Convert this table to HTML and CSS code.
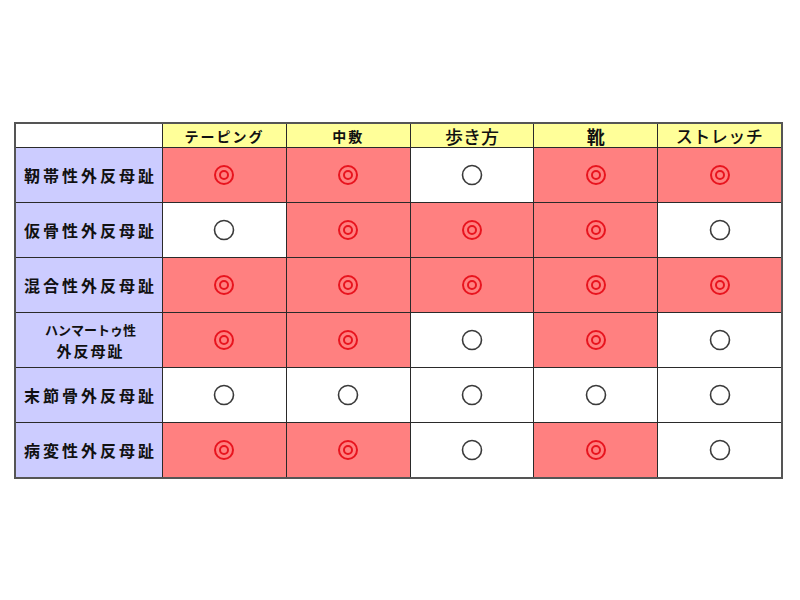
FILE: index.html
```html
<!DOCTYPE html>
<html lang="ja">
<head>
<meta charset="utf-8">
<title>外反母趾</title>
<link rel="stylesheet" href="styles.css">
</head>
<body>
<div class="page">
  <div class="grid">
    <div class="cell corner"></div>
    <div class="cell head h-tape">テーピング</div>
    <div class="cell head h-insole">中敷</div>
    <div class="cell head h-walk">歩き方</div>
    <div class="cell head h-shoe">靴</div>
    <div class="cell head h-stretch">ストレッチ</div>

    <div class="cell label">靭帯性外反母趾</div>
    <div class="cell red"><svg class="dbl" viewBox="0 0 22 22"><circle cx="11" cy="11" r="9"/><circle cx="11" cy="11" r="4"/></svg></div>
    <div class="cell red"><svg class="dbl" viewBox="0 0 22 22"><circle cx="11" cy="11" r="9"/><circle cx="11" cy="11" r="4"/></svg></div>
    <div class="cell white"><svg class="sgl" viewBox="0 0 22 22"><circle cx="11" cy="11" r="9.5"/></svg></div>
    <div class="cell red"><svg class="dbl" viewBox="0 0 22 22"><circle cx="11" cy="11" r="9"/><circle cx="11" cy="11" r="4"/></svg></div>
    <div class="cell red"><svg class="dbl" viewBox="0 0 22 22"><circle cx="11" cy="11" r="9"/><circle cx="11" cy="11" r="4"/></svg></div>

    <div class="cell label">仮骨性外反母趾</div>
    <div class="cell white"><svg class="sgl" viewBox="0 0 22 22"><circle cx="11" cy="11" r="9.5"/></svg></div>
    <div class="cell red"><svg class="dbl" viewBox="0 0 22 22"><circle cx="11" cy="11" r="9"/><circle cx="11" cy="11" r="4"/></svg></div>
    <div class="cell red"><svg class="dbl" viewBox="0 0 22 22"><circle cx="11" cy="11" r="9"/><circle cx="11" cy="11" r="4"/></svg></div>
    <div class="cell red"><svg class="dbl" viewBox="0 0 22 22"><circle cx="11" cy="11" r="9"/><circle cx="11" cy="11" r="4"/></svg></div>
    <div class="cell white"><svg class="sgl" viewBox="0 0 22 22"><circle cx="11" cy="11" r="9.5"/></svg></div>

    <div class="cell label">混合性外反母趾</div>
    <div class="cell red"><svg class="dbl" viewBox="0 0 22 22"><circle cx="11" cy="11" r="9"/><circle cx="11" cy="11" r="4"/></svg></div>
    <div class="cell red"><svg class="dbl" viewBox="0 0 22 22"><circle cx="11" cy="11" r="9"/><circle cx="11" cy="11" r="4"/></svg></div>
    <div class="cell red"><svg class="dbl" viewBox="0 0 22 22"><circle cx="11" cy="11" r="9"/><circle cx="11" cy="11" r="4"/></svg></div>
    <div class="cell red"><svg class="dbl" viewBox="0 0 22 22"><circle cx="11" cy="11" r="9"/><circle cx="11" cy="11" r="4"/></svg></div>
    <div class="cell red"><svg class="dbl" viewBox="0 0 22 22"><circle cx="11" cy="11" r="9"/><circle cx="11" cy="11" r="4"/></svg></div>

    <div class="cell label two"><span class="line small">ハンマートゥ性</span><span class="line">外反母趾</span></div>
    <div class="cell red"><svg class="dbl" viewBox="0 0 22 22"><circle cx="11" cy="11" r="9"/><circle cx="11" cy="11" r="4"/></svg></div>
    <div class="cell red"><svg class="dbl" viewBox="0 0 22 22"><circle cx="11" cy="11" r="9"/><circle cx="11" cy="11" r="4"/></svg></div>
    <div class="cell white"><svg class="sgl" viewBox="0 0 22 22"><circle cx="11" cy="11" r="9.5"/></svg></div>
    <div class="cell red"><svg class="dbl" viewBox="0 0 22 22"><circle cx="11" cy="11" r="9"/><circle cx="11" cy="11" r="4"/></svg></div>
    <div class="cell white"><svg class="sgl" viewBox="0 0 22 22"><circle cx="11" cy="11" r="9.5"/></svg></div>

    <div class="cell label">末節骨外反母趾</div>
    <div class="cell white"><svg class="sgl" viewBox="0 0 22 22"><circle cx="11" cy="11" r="9.5"/></svg></div>
    <div class="cell white"><svg class="sgl" viewBox="0 0 22 22"><circle cx="11" cy="11" r="9.5"/></svg></div>
    <div class="cell white"><svg class="sgl" viewBox="0 0 22 22"><circle cx="11" cy="11" r="9.5"/></svg></div>
    <div class="cell white"><svg class="sgl" viewBox="0 0 22 22"><circle cx="11" cy="11" r="9.5"/></svg></div>
    <div class="cell white"><svg class="sgl" viewBox="0 0 22 22"><circle cx="11" cy="11" r="9.5"/></svg></div>

    <div class="cell label">病変性外反母趾</div>
    <div class="cell red"><svg class="dbl" viewBox="0 0 22 22"><circle cx="11" cy="11" r="9"/><circle cx="11" cy="11" r="4"/></svg></div>
    <div class="cell red"><svg class="dbl" viewBox="0 0 22 22"><circle cx="11" cy="11" r="9"/><circle cx="11" cy="11" r="4"/></svg></div>
    <div class="cell white"><svg class="sgl" viewBox="0 0 22 22"><circle cx="11" cy="11" r="9.5"/></svg></div>
    <div class="cell red"><svg class="dbl" viewBox="0 0 22 22"><circle cx="11" cy="11" r="9"/><circle cx="11" cy="11" r="4"/></svg></div>
    <div class="cell white"><svg class="sgl" viewBox="0 0 22 22"><circle cx="11" cy="11" r="9.5"/></svg></div>
  </div>
</div>
</body>
</html>
```

FILE: styles.css
```css
html, body {
  margin: 0;
  padding: 0;
  background: #ffffff;
}

.page {
  padding: 122px 0 0 14px;
  font-family: "Noto Sans CJK JP", "Noto Sans", sans-serif;
  color: #111;
}

.grid {
  width: 765px;
  display: grid;
  grid-template-columns: 146px repeat(5, 1fr);
  grid-template-rows: 23px repeat(6, 54px);
  gap: 1px;
  background: #2a2a2a;
  border: 2px solid #555;
}

.cell {
  display: flex;
  align-items: center;
  justify-content: center;
  line-height: 1;
}

.corner {
  background: #ffffff;
}

.head {
  background: #ffff99;
  font-weight: 700;
}

.h-tape {
  font-size: 14px;
  letter-spacing: 2px;
}

.h-insole {
  font-size: 14px;
  letter-spacing: 2px;
}

.h-walk {
  font-size: 18px;
  font-weight: 500;
}

.h-shoe {
  font-size: 18px;
}

.h-stretch {
  font-size: 17px;
  font-weight: 500;
  letter-spacing: 0.5px;
}

.label {
  background: #ccccff;
  font-weight: 700;
  font-size: 16px;
  letter-spacing: 3px;
  padding-left: 3px;
}

.label.two {
  flex-direction: column;
  font-size: 15px;
  letter-spacing: 2px;
}

.label .line {
  display: block;
  line-height: 21px;
  height: 21px;
}

.label .small {
  font-size: 13px;
  letter-spacing: 0;
}

.red {
  background: #ff8080;
}

.white {
  background: #ffffff;
}

.dbl {
  width: 22px;
  height: 22px;
  fill: none;
  stroke: #e8141e;
  stroke-width: 2;
}

.sgl {
  width: 22px;
  height: 22px;
  fill: none;
  stroke: #3a3a3a;
  stroke-width: 1.6;
}
```
